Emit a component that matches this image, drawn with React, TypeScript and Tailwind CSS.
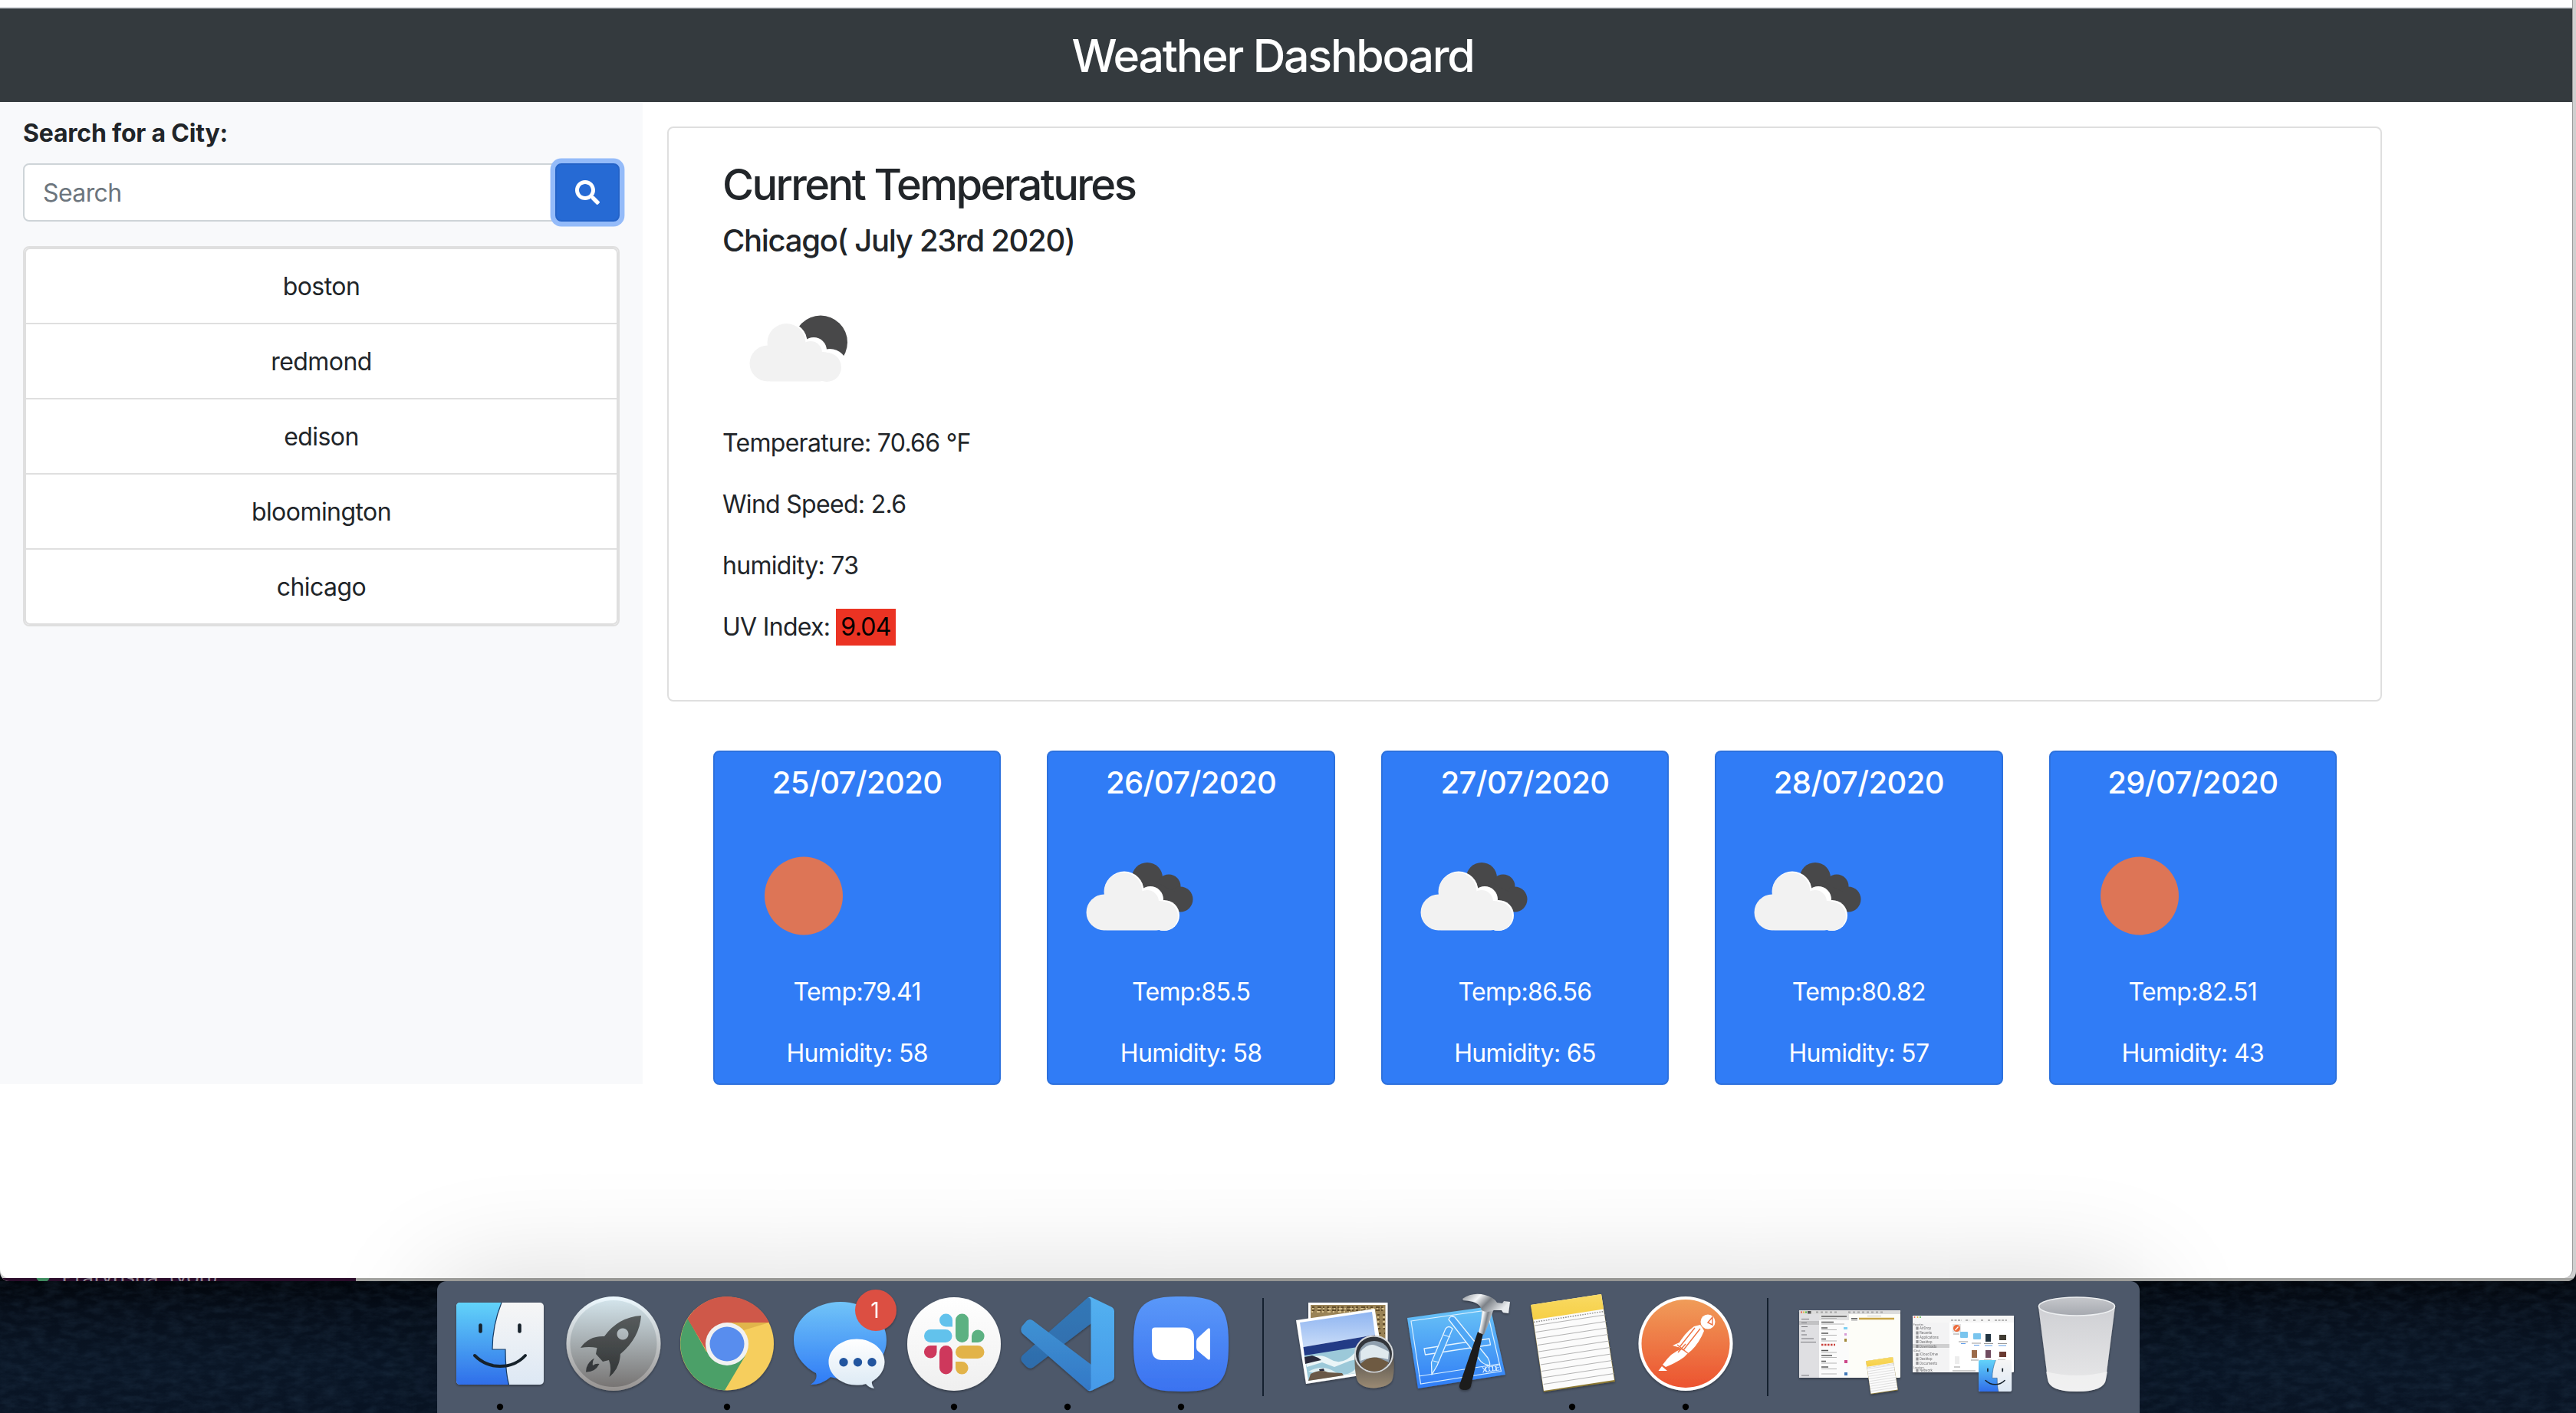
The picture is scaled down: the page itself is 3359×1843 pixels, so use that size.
import React from "react";
import { FaSearch } from "react-icons/fa";

const cities = ["boston", "redmond", "edison", "bloomington", "chicago"];

type Sky = "sun" | "clouds";
const forecast: { date: string; sky: Sky; temp: string; humidity: string }[] = [
  { date: "25/07/2020", sky: "sun", temp: "79.41", humidity: "58" },
  { date: "26/07/2020", sky: "clouds", temp: "85.5", humidity: "58" },
  { date: "27/07/2020", sky: "clouds", temp: "86.56", humidity: "65" },
  { date: "28/07/2020", sky: "clouds", temp: "80.82", humidity: "57" },
  { date: "29/07/2020", sky: "sun", temp: "82.51", humidity: "43" },
];

function Cloud() {
  return (
    <g>
      <g fill="#ffffff">
        <circle cx="82" cy="94" r="25.500" />
        <circle cx="116" cy="105" r="17" />
        <circle cx="134" cy="126" r="20" />
      </g>
      <g fill="#f2f2f2">
        <circle cx="80.500" cy="95" r="25" />
        <circle cx="112" cy="108" r="15" />
        <circle cx="133" cy="127" r="19" />
        <circle cx="56" cy="122" r="23.500" />
        <rect x="50" y="110" width="84" height="35.500" rx="10" />
        <circle cx="128" cy="126" r="19" />
      </g>
    </g>
  );
}

function SunIcon() {
  return (
    <svg viewBox="0 0 200 200" className="size-[200px]">
      <circle cx="100" cy="100.500" r="51" fill="#dd7556" />
    </svg>
  );
}

function CloudsIcon() {
  return (
    <svg viewBox="0 0 200 200" className="size-[200px]">
      <g fill="#484849">
        <circle cx="113" cy="77" r="20" />
        <circle cx="141" cy="88" r="15.5" />
        <circle cx="156" cy="105" r="16.5" />
        <path d="M98 90 L120 80 L150 96 L150 118 L120 112Z" />
      </g>
      <g transform="translate(1,0)">
        <Cloud />
      </g>
    </svg>
  );
}

function CloudNightIcon() {
  return (
    <svg viewBox="0 0 200 200" className="size-[200px]">
      <circle cx="128" cy="92.500" r="35" fill="#484849" />
      <g transform="translate(3,-2)">
        <circle cx="137" cy="126" r="23" fill="#ffffff" />
        <Cloud />
      </g>
    </svg>
  );
}

function FinderFace() {
  return (
    <g>
      <rect x="17" y="28" width="114" height="107" rx="5" fill="url(#finderWhite)" />
      <path d="M22 28 H76 C68 48 64 68 64 89 H81 C81 106 82 122 85.5 135 H22 Q17 135 17 130 V33 Q17 28 22 28Z" fill="url(#finderBlue)" />
      <path d="M76 28 C68 48 64 68 64 89 H81 C81 106 82 122 85.5 135" fill="none" stroke="#173b63" strokeWidth="1.2" />
      <g stroke="#16202b" strokeWidth="4.6" strokeLinecap="round" fill="none">
        <path d="M48.5 57.5V65.5" />
        <path d="M99.5 57.5V65.5" />
        <path d="M41 97 Q55 111 74 111 Q94 111 107 97" strokeWidth="4" />
      </g>
    </g>
  );
}

function NotePad() {
  const rows = [58, 66.5, 75, 83.5, 92, 100.5, 109, 117.5, 126, 134.5];
  return (
    <g>
      <path d="M20 31 L112 17 L130 131 L37 144.5Z" fill="#8e7a33" />
      <path d="M20.500 31 L112 17 L129 129 L37 143Z" fill="#fbfbfb" />
      <path d="M20 31 L112 17 L115 36.500 L23.200 50.500Z" fill="url(#noteYellow)" />
      <path d="M24 53.500 L115.500 39.500" stroke="#8a8a8a" strokeWidth="1.4" strokeDasharray="1.6 1.6" />
      {rows.map((y) => (
        <path key={y} d={`M${24 + (y - 50) * 0.15} ${y} l92 -14`} stroke="#a9a9a9" strokeWidth="0.9" />
      ))}
    </g>
  );
}

function Gradients() {
  const g = (id: string, a: string, b: string) => (
    <linearGradient id={id} x1="0" y1="0" x2="0" y2="1">
      <stop offset="0" stopColor={a} />
      <stop offset="1" stopColor={b} />
    </linearGradient>
  );
  return (
    <svg className="absolute size-0" aria-hidden="true">
      <defs>
        {g("finderBlue", "#62d3f9", "#2f6eea")}
        {g("finderWhite", "#f6f6f6", "#dde8f4")}
        {g("launchRim", "#edf9ff", "#969290")}
        {g("launchFace", "#d2e3ea", "#777473")}
        {g("rocket", "#575c5d", "#323536")}
        {g("bubbleBlue", "#71c4f8", "#2f7bf6")}
        {g("bubbleWhite", "#ffffff", "#dbe9f4")}
        {g("slackDisc", "#ffffff", "#efefef")}
        {g("codePanel", "#53b1f0", "#4599e8")}
        {g("codeUp", "#3378b7", "#2e6cab")}
        {g("codeDown", "#3f92d3", "#3378c6")}
        {g("zoomBg", "#5a98f9", "#3a72f0")}
        {g("noteYellow", "#f9da63", "#f6cf45")}
        {g("postman", "#f09c59", "#ec5330")}
        {g("xcode", "#69c4f6", "#2f7cf6")}
        {g("sky", "#8fb5f1", "#c9dcf8")}
        {g("loupe", "#56524e", "#9a8a73")}
        {g("trashBody", "#cfd0d4", "#e9e9ea")}
        {g("trashHole", "#c6c8cc", "#a5a8af")}
        <linearGradient id="steel" x1="0" y1="0" x2="1" y2="0.4">
          <stop offset="0" stopColor="#8b9096" />
          <stop offset="0.35" stopColor="#f4f6f8" />
          <stop offset="0.6" stopColor="#7d8288" />
          <stop offset="1" stopColor="#e8ebee" />
        </linearGradient>
        <filter id="lift" x="-20%" y="-20%" width="140%" height="140%">
          <feDropShadow dx="0" dy="1.5" stdDeviation="1.5" floodColor="#000000" floodOpacity="0.35" />
        </filter>
        <filter id="grain">
          <feTurbulence type="fractalNoise" baseFrequency="0.05 0.12" numOctaves="5" seed="4" />
          <feColorMatrix values="0 0 0 0 0.06  0 0 0 0 0.13  0 0 0 0 0.22  1.2 0 0 0 -0.4" />
        </filter>
      </defs>
    </svg>
  );
}

function DockItem({ running, label, children }: { running?: boolean; label: string; children: React.ReactNode }) {
  return (
    <svg viewBox="0 0 148 172" className="h-[172px] w-[148px] shrink-0 overflow-visible" role="img" aria-label={label}>
      <g filter="url(#lift)">{children}</g>
      {running && <circle cx="74" cy="164" r="4.2" fill="#000000" />}
    </svg>
  );
}

function DockDivider() {
  return (
    <div className="flex h-[172px] w-[66px] shrink-0 items-start justify-center pt-[22px]">
      <div className="h-[128px] w-[2px] bg-[#14202f]" />
    </div>
  );
}

function PreviewArt() {
  return (
    <g>
      <rect x="26" y="28" width="103.5" height="80" fill="#ffffff" />
      <rect x="29" y="31" width="97.500" height="74" fill="#9a8356" />
      <path d="M31 34h94M31 38h94M116 44h10M116 50h10M116 56h10M117 62h9M118 68h8" stroke="#5e4c2a" strokeWidth="2" strokeDasharray="3 4 5 2 2 3" />
      <path d="M31 36h94M30 40h50M116 47h10M116 53h10M116 60h10" stroke="#d6bf8b" strokeWidth="1.8" strokeDasharray="2 5 4 3" />
      <path d="M10 51 L112.600 36 L126 118 L23 134Z" fill="#ffffff" />
      <path d="M15 54 L109 40 L113 70 L19.500 86Z" fill="url(#sky)" />
      <path d="M19.500 86 L113 70 L115 85 L21.500 101Z" fill="#233a86" />
      <path d="M21 97 L115 82 L121 115 L26 130Z" fill="#9cc9d9" />
      <path d="M22 103 Q40 92 55 102 T88 92 L100 90 L98 100 L80 104 L60 112 L44 106 L24 112Z" fill="#eaf5f7" />
      <path d="M26 118 Q44 108 60 118 T90 112 L92 119 L60 125Z" fill="#dfeff2" />
      <path d="M21 99 l10 -2 8 3 4 3 -9 2 -12 3Z M40 115l6-1 1 3-6 1Z" fill="#2b2b3a" />
      <path d="M26 130 L29 121 Q42 114 52 119 L70 120 L72 123Z" fill="#6b5946" />
      <path d="M86.500 96 Q86 126 92 133 Q100 140 112 139.500 Q130 138 135 130 Q139 120 137 96Z" fill="url(#loupe)" />
      <ellipse cx="111.500" cy="95" rx="25.500" ry="24.500" fill="#d5d8db" />
      <ellipse cx="111.500" cy="95" rx="23.500" ry="22.500" fill="#33363a" />
      <ellipse cx="112" cy="98" rx="20.500" ry="20" fill="#8f9fae" />
      <path d="M94 92 Q104 80 114 84 T131 92 L130 102 Q112 96 94 104Z" fill="#dfe9ee" />
      <path d="M94 108 Q106 96 120 101 L131 106 Q124 118 112 118 Q98 117 94 108Z" fill="#6e5a43" />
    </g>
  );
}

function XcodeArt() {
  return (
    <g>
      <path d="M7 48 L115 33 L135 122 L21 140Z" fill="url(#xcode)" />
      <path d="M12 52 L111 38 L129.500 117.500 L24.500 134Z M22 124 L127.500 108" fill="none" stroke="#d9efff" strokeWidth="1.2" />
      <g fill="none" stroke="#e6f5ff" strokeWidth="1.3" strokeLinejoin="round">
        <path d="M29 88 L114 75 L115.500 83 L30.500 96Z" />
        <path d="M61 50 Q63 44 69 47 L112 100 Q116 108 114 110 Q104 108 101 102Z" fill="#50a6f5" />
        <path d="M57 62 Q61 57 66 62 L46 110 L39 122 L38.500 106Z" fill="#50a6f5" />
        <path d="M54 70 L63 73 M41 104 L48 106" />
      </g>
      <text x="105" y="119.500" fontSize="10" fill="#e6f5ff" fontFamily="Roboto" transform="rotate(-8 105 119.500)" textLength="23">XCODE</text>
      <path d="M106 68 L99 66 L75 136 Q74 142 82 142 Q89 142 90 137Z" fill="#1b1c1e" />
      <path d="M100 67 Q105 48 104 34 L120 34 Q118 44 107 70Z" fill="url(#steel)" />
      <path d="M79 23 Q92 14 108 18 Q120 21 124 28 L131 29 L133 26 L141 27 L139 42 L132 41 L130 38 L120 38 Q110 42 104 38 Q102 26 80 25Z" fill="url(#steel)" />
    </g>
  );
}

function Dock() {
  return (
    <nav className="relative z-10 mx-auto flex h-[172px] w-[2220px] rounded-t-[12px] bg-[#4d586a] px-[8px] shadow-[0_0_150px_rgba(0,0,0,0.16)]">
      <DockItem label="Finder" running>
        <FinderFace />
      </DockItem>
      <DockItem label="Launchpad">
        <circle cx="74" cy="81.5" r="61.5" fill="url(#launchRim)" />
        <circle cx="74" cy="81.5" r="56.5" fill="url(#launchFace)" />
        <path fillRule="evenodd" d="M110 45 Q80 47 62 72 Q42 71 31 87 Q42 85 52.500 87 L51 95 L60 105 L68 103 Q72 114 68.500 125 Q82 114 83 95 Q108 74 110 45Z M86 61.500 a7.500 7.500 0 1 0 0.010 0Z" fill="url(#rocket)" />
        <path d="M49 100.500 Q38 107 38 118.500 Q50 119 55.500 108 Q51 107 47 110 Q46 105 49 100.500Z" fill="#35383a" />
      </DockItem>
      <DockItem label="Chrome" running>
        <circle cx="74" cy="81.500" r="61" fill="#f6ce5d" />
        <path d="M23 48.500 A61 61 0 0 0 71 142.500 L98 97 L74 82 L47 92Z" fill="#4ba067" />
        <path d="M22.500 49 A61 61 0 0 1 129 54 L74 54 L74 82 L48 92Z" fill="#cf5849" />
        <path d="M74 54 H129 L96 64Z" fill="#d9a945" opacity="0.7" />
        <circle cx="74" cy="82" r="28" fill="#f1f1f1" />
        <circle cx="74" cy="82" r="22.500" fill="#598dee" />
      </DockItem>
      <DockItem label="Messages">
        <path d="M74 27 C107 27 134 49 134 77 S107 127 74 127 Q67 127 61 125 Q50 135 35 135 Q45 128 42 120 C25 111 13 95 13 77 C13 49 41 27 74 27Z" fill="url(#bubbleBlue)" />
        <path d="M95 75.500 C115 75.500 131.500 89 131.500 105.500 Q131 121 115 131 Q114 135 118 140 Q111 139 107 134 Q101 136 95 135.500 C75 135.500 58.500 122 58.500 105.500 S75 75.500 95 75.500Z" fill="url(#bubbleWhite)" />
        <circle cx="78" cy="105.700" r="5.700" fill="#23559f" />
        <circle cx="96.500" cy="105.700" r="5.700" fill="#23559f" />
        <circle cx="115" cy="105.700" r="5.700" fill="#23559f" />
        <circle cx="120" cy="38" r="27" fill="#dc4f43" />
        <text x="119" y="48" fontSize="28" fill="#ffffff" textAnchor="middle" fontFamily="Inter">1</text>
      </DockItem>
      <DockItem label="Slack" running>
        <circle cx="74" cy="82" r="61" fill="url(#slackDisc)" />
        <g fill="#62c2ec">
          <rect x="35" y="63" width="36.500" height="17" rx="8.500" />
          <path d="M72 59.500 H63.500 A8.500 8.500 0 1 1 72 51Z" />
        </g>
        <g fill="#5bb182">
          <rect x="76" y="42.500" width="17" height="37.500" rx="8.500" />
          <path d="M97 80 V71.500 A8.300 8.300 0 1 1 105.300 80Z" />
        </g>
        <g fill="#ce375c">
          <rect x="55" y="84" width="17" height="37.500" rx="8.500" />
          <path d="M51.500 84 V92.500 A8.300 8.300 0 1 1 43.200 84Z" />
        </g>
        <g fill="#e2b34a">
          <rect x="76" y="84" width="37.500" height="17" rx="8.500" />
          <path d="M76 105 H84.300 A8.300 8.300 0 1 1 76 113.300Z" />
        </g>
      </DockItem>
      <DockItem label="Visual Studio Code" running>
        <path d="M101 21 L105 20 V55 L30 112 Q25 116 20 111 L14.500 105 Q12 101 15 97Z" fill="url(#codeUp)" />
        <path d="M21 51.500 Q25 48.500 29 51.500 L105 109 V143 H101 L15 68 Q12 64 14.500 59Z" fill="url(#codeDown)" />
        <path d="M101 21.500 Q103 20 106 21.500 L132 34 Q135 36 135 39 V125 Q135 128 132 130 L106 142.500 Q103 144 101 142.500 Q104.500 142 104.500 138 V26 Q104.500 22 101 21.500Z" fill="url(#codePanel)" />
      </DockItem>
      <DockItem label="Zoom" running>
        <path d="M74 20 C124 20 136 32 136 82 S124 144 74 144 S12 132 12 82 S24 20 74 20Z" fill="url(#zoomBg)" />
        <path d="M40 60.500 H77 Q91 60.500 91 75 V99 Q91 103 87 103 H50 Q36 103 36 89 V64.500 Q36 60.500 40 60.500Z" fill="#ffffff" />
        <path d="M94 78 Q94 75 97 73 L109 62 Q112 60 112 64 V100 Q112 104 109 102 L97 92 Q94 90 94 87Z" fill="#ffffff" />
      </DockItem>
      <DockDivider />
      <DockItem label="Preview">
        <PreviewArt />
      </DockItem>
      <DockItem label="Xcode">
        <XcodeArt />
      </DockItem>
      <DockItem label="Notes" running>
        <NotePad />
      </DockItem>
      <DockItem label="Postman" running>
        <circle cx="74" cy="81.500" r="61.500" fill="#ffffff" />
        <circle cx="74" cy="81.500" r="57.500" fill="url(#postman)" />
        <g fill="#ffffff">
          <circle cx="103" cy="53" r="9.500" />
          <path d="M93 57 Q97 62 98 65 Q92 80 82 90 L76 95 L70 89 L63 85 Q72 68 85 59Z" />
          <path d="M57 84 L66 80 L64 86Z" />
          <path d="M68 89 L77 94 Q70 103 48 112 L44 109 Q56 92 68 89Z" />
          <path d="M43 111 L50 117 L38.500 117Z" />
        </g>
        <path d="M103 54 l6 -7 v10Z M66 86 L86 61 M71 90 L93 62 M63 83 L78 95 M64 93 L74 82" fill="none" stroke="#ee7243" strokeWidth="1.4" />
      </DockItem>
      <DockDivider />
      <DockItem label="Notes window">
        <rect x="8" y="38" width="132" height="88" rx="1.500" fill="#fdfdf8" />
        <rect x="8" y="38" width="132" height="5" fill="#dcdcdc" />
        <rect x="8" y="43" width="26" height="83" fill="#dfdfe2" />
        <rect x="34" y="43" width="39" height="83" fill="#fbfbfb" />
        <rect x="34" y="43" width="39" height="8" fill="#e2e2e2" />
        <rect x="8" y="52" width="26" height="5" fill="#c2c2c4" />
        <path d="M10 40.500h2" stroke="#ec5f57" strokeWidth="2" />
        <path d="M13 40.500h2" stroke="#e8b93c" strokeWidth="2" />
        <path d="M16 40.500h2" stroke="#52b84a" strokeWidth="2" />
        <rect x="19" y="39" width="4.500" height="3.500" fill="#555555" />
        <path d="M30 40.500h28M72 40.500h46" stroke="#a5a5a5" strokeWidth="2" strokeDasharray="3 3" />
        <path d="M11 49.500h10M11 54.500h7M11 59.500h8M11 65h5M11 70h7M11 75h16M10 79.500h20M11 123h10" stroke="#77777b" strokeWidth="1.200" />
        <path d="M37 46h33M37 53.500h16M37 61h8M37 68h9M37 75.500h6M37 90.500h9M37 97h14M37 104.500h6M37 112h9" stroke="#5a5a5a" strokeWidth="1.300" />
        <path d="M37 48.500h20M37 56h30M37 63.500h20M37 70.500h20M37 78h20M37 93h20M37 99.500h20M37 107h20M37 114.500h20M37 121h20" stroke="#b4b4b4" strokeWidth="1" />
        <path d="M37 83h18" stroke="#c9403a" strokeWidth="2.500" strokeDasharray="2.500 1.500" />
        <rect x="66" y="60" width="5" height="3" fill="#7fd0f3" />
        <rect x="67" y="75" width="3" height="4" fill="#a38a3e" />
        <rect x="67" y="68" width="3" height="3" fill="#d79bd5" />
        <rect x="67" y="103" width="4" height="4" fill="#cc4488" />
        <rect x="67" y="119" width="4" height="4" fill="#3f78b8" />
        <path d="M76 49h8" stroke="#444444" strokeWidth="1.500" />
        <path d="M86 49h46" stroke="#c9a544" strokeWidth="2.500" />
        <path d="M97 45.500h18M76 51.500h8" stroke="#bbbbbb" strokeWidth="0.800" />
        <g transform="translate(87.500,92.500) scale(0.38)">
          <NotePad />
        </g>
      </DockItem>
      <DockItem label="Downloads window">
        <rect x="8" y="45" width="132" height="74" rx="1.500" fill="#ffffff" />
        <rect x="8" y="45" width="132" height="9" fill="#f6f6f6" />
        <rect x="8" y="54" width="48" height="65" fill="#f3f3f4" />
        <rect x="8" y="82" width="48" height="5" fill="#cfcfd0" />
        <circle cx="10.500" cy="47" r="1" fill="#ec5f57" />
        <circle cx="14.500" cy="47" r="1" fill="#e8b93c" />
        <circle cx="18" cy="47" r="1" fill="#52b84a" />
        <path d="M58 51h14M77 51h5M87 51h4M97 51h3M106 51h3M115 51h16" stroke="#b5b5b5" strokeWidth="2" strokeDasharray="3 1.500" />
        <g fontFamily="Roboto" fontSize="4.500" fill="#707072">
          <text x="9" y="58" fontSize="3.200">Favorites</text>
          <text x="17" y="63">AirDrop</text>
          <text x="17" y="69">Recents</text>
          <text x="17" y="74.500">Applications</text>
          <text x="17" y="80.500">Desktop</text>
          <text x="17" y="86.500">Downloads</text>
          <text x="9" y="92" fontSize="3.200">iCloud</text>
          <text x="17" y="97">iCloud Drive</text>
          <text x="17" y="103">Desktop</text>
          <text x="17" y="108.500">Documents</text>
          <text x="9" y="113.500" fontSize="3.200">Locations</text>
          <text x="17" y="118">Network</text>
        </g>
        <path d="M14 59.500v4M14 65.500v4M14 71v4M14 77v4M14 83v4M14 94v4M14 99.500v4M14 105v4M14 114.500v4" stroke="#6d6d70" strokeWidth="3.200" opacity="0.700" />
        <rect x="60" y="56" width="11" height="11" fill="#e4e4e4" />
        <circle cx="65.500" cy="61.500" r="4.500" fill="#ed6c3c" />
        <path d="M63.500 64l4-4.500" stroke="#ffffff" strokeWidth="1.200" />
        <rect x="70" y="66" width="10" height="8" rx="1" fill="#7ac5ee" />
        <rect x="87" y="68" width="10" height="8" rx="1" fill="#7ac5ee" />
        <rect x="103" y="69" width="7" height="10" fill="#223443" />
        <rect x="121" y="70" width="9" height="7" fill="#3f3a30" />
        <rect x="85" y="90" width="7" height="10" fill="#9b6a4a" />
        <rect x="103" y="90" width="7" height="10" fill="#6f4c5e" />
        <rect x="121" y="92" width="9" height="7" fill="#6b3b33" />
        <rect x="63" y="98" width="6" height="10" fill="#ededed" />
        <path d="M61 69h8M68 79h12M85 81h12M101 81.500h12M119 81.500h12M84 103h10M101 103h10M119 103h10M62 112h8M60 117h30" stroke="#999999" strokeWidth="1" />
        <path d="M71 81.500h6M88 83.500h7M102 84h10M120 84h10" stroke="#5c9bea" strokeWidth="1" />
        <g transform="translate(87.600,92.300) scale(0.378,0.383)">
          <FinderFace />
        </g>
      </DockItem>
      <DockItem label="Trash">
        <path d="M24 33 L36 127 Q37 144 74 144 Q111 144 112 127 L124 33Z" fill="url(#trashBody)" />
        <path d="M34 118 Q74 128 114 118 L112 128 Q110 144 74 144 Q38 144 36 128Z" fill="#f4f4f4" opacity="0.700" />
        <ellipse cx="74" cy="33" rx="49.500" ry="12" fill="url(#trashHole)" stroke="#eef0f2" strokeWidth="1.500" />
      </DockItem>
    </nav>
  );
}

function Sidebar() {
  return (
    <aside className="h-[1281px] w-[838px] bg-[#f8f9fb] pt-[17px] pr-[30px] pl-[30px]">
      <h5 className="h-[48px] text-[32px] leading-[48px] font-bold tracking-[-0.2px]">Search for a City:</h5>
      <div className="mt-[15px] flex h-[76px]">
        <div className="flex w-[694px] items-center rounded-l-[8px] border-2 border-[#ced4d8] bg-white pt-[2px] pl-[24px] text-[32px] tracking-[-0.6px] text-[#6c757d]">
          Search
        </div>
        <button className="flex w-[84px] items-center justify-center rounded-[8px] border-2 border-[#2463c8] bg-[#266ad4] text-white shadow-[0_0_0_6.400px_#94bbf9]">
          <FaSearch className="size-[32px]" />
        </button>
      </div>
      <ul className="mt-[32px] rounded-[8px] border-2 border-[#dfdfdf]">
        {cities.map((city) => (
          <li key={city} className="-mt-[2px] flex h-[100px] items-center justify-center border-2 border-[#dfdfdf] bg-white pt-[2px] text-[32px] tracking-[-0.55px] first:mt-0 first:rounded-t-[7px] last:rounded-b-[7px]">
            {city}
          </li>
        ))}
      </ul>
    </aside>
  );
}

function Current() {
  return (
    <section className="h-[750px] w-[2236px] rounded-[8px] border-2 border-[#dfdfdf] bg-white pt-[41px] pl-[70px] text-[32px] leading-[48px] tracking-[-0.7px]">
      <h3 className="h-[67px] text-[56px] leading-[67px] font-[550] tracking-[-2.6px]">Current Temperatures</h3>
      <h5 className="mt-[15px] text-[40px] leading-[48px] font-[550] tracking-[-1.3px]">Chicago( July 23rd 2020)</h5>
      <div className="mt-[16px]">
        <CloudNightIcon />
      </div>
      <div className="flex flex-col gap-[32px]">
        <p>Temperature: 70.66 °F</p>
        <p>Wind Speed: 2.6</p>
        <p>humidity: 73</p>
        <p className="flex gap-[8px]">
          UV Index: <span className="bg-[#eb3323] px-[6px] text-black">9.04</span>
        </p>
      </div>
    </section>
  );
}

export default function App() {
  return (
    <div className="relative flex h-[1843px] w-[3359px] flex-col overflow-hidden bg-[linear-gradient(180deg,#02060c_1671px,#070f1b_1710px,#0a1626_1780px,#091424_1843px)] text-[#212529] [font-family:Inter,'Liberation_Sans',sans-serif]">
      <Gradients />
      <div className="flex h-[1671px] shrink-0 flex-col overflow-hidden rounded-b-[12px] bg-[#cfcfcf]">
        <div className="h-[1667px] w-[3355px] shrink-0 overflow-hidden rounded-b-[12px] border-r border-[#9b9b9b] bg-white">
          <div className="h-[11px] border-b-2 border-[#dadce0] bg-white" />
          <header className="flex h-[122px] items-center justify-center bg-[#343a3e] pt-[3px] pr-[35px] text-[59px] font-[550] tracking-[-2.2px] text-white">
            <h1>Weather Dashboard</h1>
          </header>
          <div className="flex gap-[32px]">
            <Sidebar />
            <main className="pt-[32px]">
              <Current />
              <div className="mt-[64px] ml-[60px] grid w-[2117px] grid-cols-5 gap-[60px]">
                {forecast.map((day) => (
                  <article key={day.date} className="flex h-[436px] flex-col rounded-[8px] border-2 border-[#2d71dd] bg-[#307cf6] px-[16px] pt-[16px] text-center text-[32px] leading-[48px] tracking-[-0.65px] text-white">
                    <h5 className="mb-[23px] text-[40px] leading-[48px] font-[550] tracking-[-0.6px]">{day.date}</h5>
                    {day.sky === "sun" ? <SunIcon /> : <CloudsIcon />}
                    <p className="mt-[2px]">Temp:{day.temp}</p>
                    <p className="mt-[32px]">Humidity: {day.humidity}</p>
                  </article>
                ))}
              </div>
            </main>
          </div>
        </div>
        <div className="flex h-[4px] overflow-hidden bg-[#a3a3a0]">
          <div className="flex h-[4px] w-[464px] overflow-hidden bg-[#2b0d2b] pl-[47px]">
            <div className="-mt-[12px] size-[18px] shrink-0 rounded-full bg-[#3f8a5f]" />
            <div className="-mt-[21px] ml-[15px] text-[29px] leading-[36px] whitespace-pre text-[#8f838f] [font-family:Lato,sans-serif]">Pratyusha  (you)</div>
          </div>
        </div>
      </div>
      <svg className="absolute top-[1671px] left-0 h-[172px] w-[3359px]">
        <rect width="3359" height="172" filter="url(#grain)" opacity="0.25" />
      </svg>
      <Dock />
    </div>
  );
}
